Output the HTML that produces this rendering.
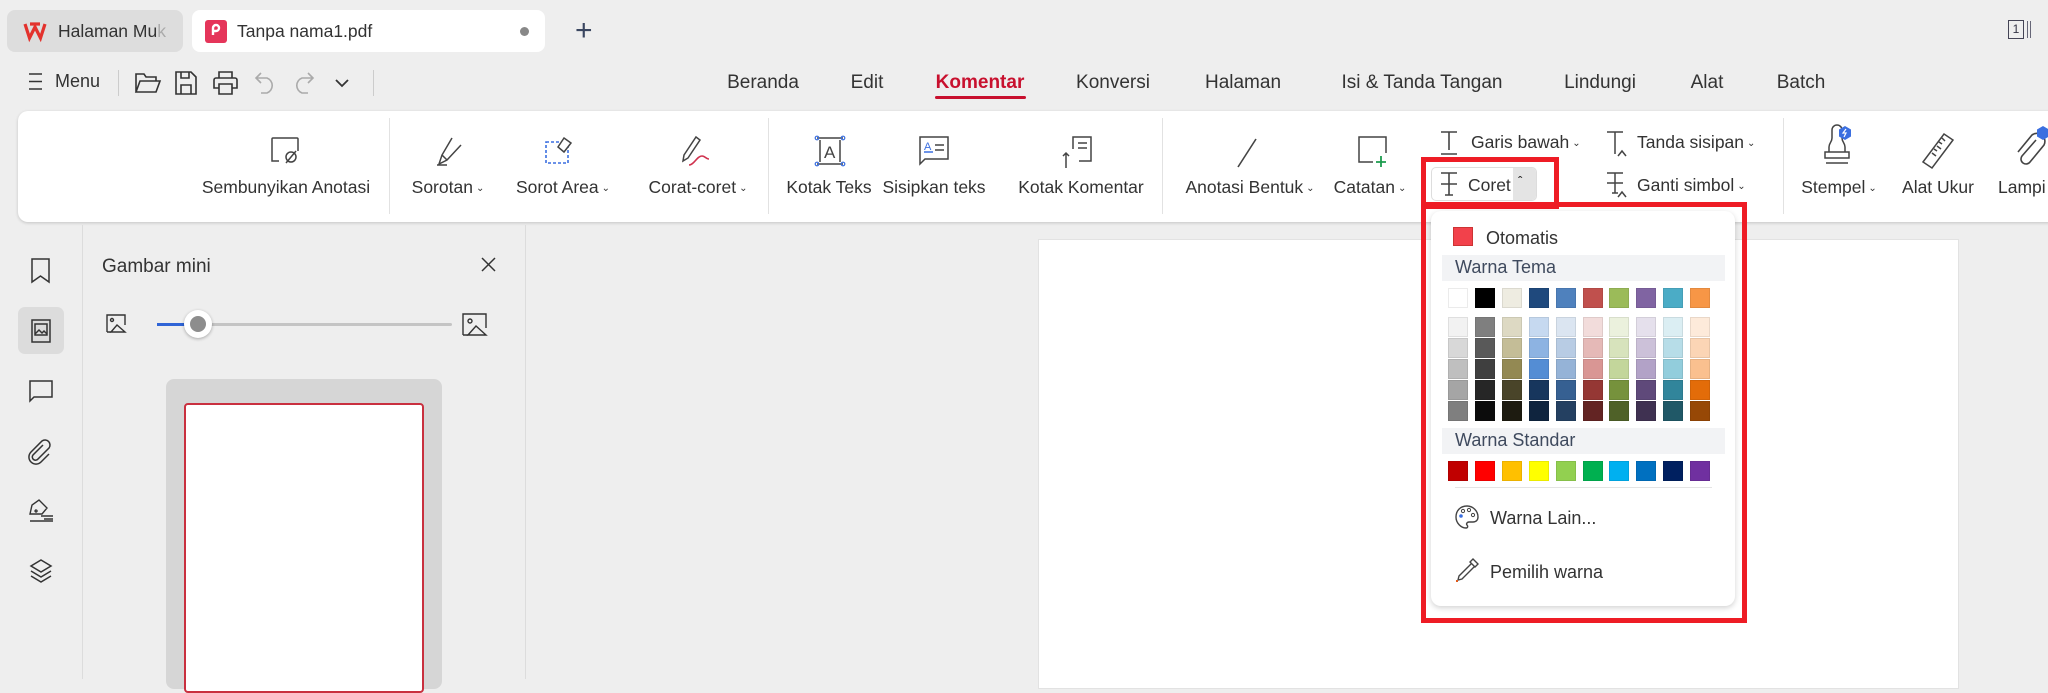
<!DOCTYPE html>
<html><head><meta charset="utf-8"><style>
*{box-sizing:border-box;margin:0;padding:0}
body{width:2048px;height:679px;overflow:hidden;background:#eeeeee;font-family:"Liberation Sans",sans-serif;color:#222;position:relative}
.a{position:absolute}
.t{position:absolute;white-space:nowrap;font-size:17.5px;color:#333}
.c{transform:translateX(-50%)}
svg{position:absolute;overflow:visible}
.sw{position:absolute;width:20px;height:20px;border:1px solid rgba(0,0,0,.08)}
.ch{font-size:10px;color:#333;margin-left:3px;vertical-align:2px}
</style></head><body>
<div class="a" style="left:7px;top:10px;width:176px;height:42px;background:#dddddd;border-radius:8px"></div>
<svg style="left:24px;top:21px" width="22" height="20" viewBox="0 0 22 20"><path d="M1 3 L5.5 17 L11 6 L16.5 17 L21 3 M6 3 H16" fill="none" stroke="#e3322d" stroke-width="3.2"/></svg>
<div class="t" style="left:58px;top:21px;color:#333">Halaman Mu<span style="color:#aaa">k</span></div>
<div class="a" style="left:192px;top:10px;width:353px;height:42px;background:#fff;border-radius:8px"></div>
<div class="a" style="left:205px;top:20px;width:22px;height:23px;background:#e5355a;border-radius:3px"></div>
<svg style="left:209px;top:23px" width="14" height="14" viewBox="0 0 14 14"><path d="M4 12 V5 a3 3 0 1 1 3 3 H4" fill="none" stroke="#fff" stroke-width="2.4"/></svg>
<div class="t" style="left:237px;top:21px">Tanpa nama1.pdf</div>
<div class="a" style="left:520px;top:27px;width:9px;height:9px;border-radius:50%;background:#888"></div>
<div class="t" style="left:575px;top:14px;font-size:30px;color:#3a4660">+</div>
<div class="a" style="left:2008px;top:20px;width:16px;height:19px;border:1.5px solid #445;font-size:12px;text-align:center;line-height:16px;color:#334">1</div>
<div class="a" style="left:2027px;top:21px;width:1px;height:17px;background:#667"></div>
<div class="a" style="left:2030px;top:21px;width:1px;height:17px;background:#667"></div>
<svg style="left:29px;top:73px" width="13" height="17"><path d="M0 1H13M0 8.5H13M0 16H13" stroke="#333" stroke-width="1.5"/></svg>
<div class="t" style="left:55px;top:71px;font-size:18px">Menu</div>
<div class="a" style="left:118px;top:70px;width:1px;height:26px;background:#ccc"></div>
<svg style="left:135px;top:72px" width="26" height="22" viewBox="0 0 26 22" fill="none" stroke="#333" stroke-width="1.6"><path d="M1 20V2h8l2 3h10v4M1 20l4-11h20l-4 11z"/></svg>
<svg style="left:175px;top:71px" width="22" height="24" viewBox="0 0 22 24" fill="none" stroke="#333" stroke-width="1.6"><path d="M1 1h15l5 5v17H1zM6 1v6h8V1M6 23v-9h10v9"/></svg>
<svg style="left:213px;top:71px" width="25" height="24" viewBox="0 0 25 24" fill="none" stroke="#333" stroke-width="1.6"><path d="M6 7V1h13v6M3 7h19a2 2 0 0 1 2 2v8h-5M6 17H1V9a2 2 0 0 1 2-2M6 13h13v10H6z"/></svg>
<svg style="left:255px;top:72px" width="21" height="22" viewBox="0 0 21 22" fill="none" stroke="#aaa" stroke-width="1.6"><path d="M6 1L1 6l5 5M1 6h11a8 8 0 0 1 0 15H6"/></svg>
<svg style="left:293px;top:72px" width="21" height="22" viewBox="0 0 21 22" fill="none" stroke="#aaa" stroke-width="1.6"><path d="M15 1l5 5-5 5M20 6H9a8 8 0 0 0 0 15h6"/></svg>
<svg style="left:335px;top:79px" width="14" height="8"><path d="M1 1l6 6 6-6" fill="none" stroke="#333" stroke-width="1.8"/></svg>
<div class="a" style="left:373px;top:70px;width:1px;height:26px;background:#ccc"></div>
<div class="t c" style="left:763px;top:72px;font-size:19px">Beranda</div>
<div class="t c" style="left:867px;top:72px;font-size:19px">Edit</div>
<div class="t c" style="left:980px;top:72px;font-size:19px;color:#c8102e;font-weight:bold">Komentar</div>
<div class="a" style="left:935px;top:96px;width:91px;height:3px;background:#c8102e;border-radius:2px"></div>
<div class="t c" style="left:1113px;top:72px;font-size:19px">Konversi</div>
<div class="t c" style="left:1243px;top:72px;font-size:19px">Halaman</div>
<div class="t c" style="left:1422px;top:72px;font-size:19px">Isi &amp; Tanda Tangan</div>
<div class="t c" style="left:1600px;top:72px;font-size:19px">Lindungi</div>
<div class="t c" style="left:1707px;top:72px;font-size:19px">Alat</div>
<div class="t c" style="left:1801px;top:72px;font-size:19px">Batch</div>
<div class="a" style="left:18px;top:111px;width:2060px;height:111px;background:#fff;border-radius:10px;box-shadow:0 1px 3px rgba(0,0,0,.18)"></div>
<div class="a" style="left:389px;top:118px;width:1px;height:96px;background:#e2e2e2"></div>
<div class="a" style="left:768px;top:118px;width:1px;height:96px;background:#e2e2e2"></div>
<div class="a" style="left:1162px;top:118px;width:1px;height:96px;background:#e2e2e2"></div>
<div class="a" style="left:1783px;top:118px;width:1px;height:96px;background:#e2e2e2"></div>
<svg style="left:271px;top:137px" width="30" height="28" viewBox="0 0 30 28" fill="none" stroke="#444" stroke-width="1.5"><path d="M4 24H1V2a1 1 0 0 1 1-1h24a1 1 0 0 1 1 1v12M4 24h4"/><circle cx="20" cy="20" r="5"/><path d="M15 26l10-12"/></svg>
<svg style="left:434px;top:137px" width="28" height="29" viewBox="0 0 28 29" fill="none" stroke="#444" stroke-width="1.5"><path d="M18 1L8 18l-3 9 8-4 14-15M8 18l5 5M3 28h10"/></svg>
<svg style="left:545px;top:137px" width="30" height="27" viewBox="0 0 30 27" fill="none"><rect x="1" y="5" width="22" height="21" stroke="#3b6fe0" stroke-width="1.6" stroke-dasharray="3 2"/><path d="M19 1l7 5-7 9-6-5z" fill="#fff" stroke="#444" stroke-width="1.5"/></svg>
<svg style="left:681px;top:136px" width="32" height="32" viewBox="0 0 32 32" fill="none"><path d="M15 1l4 3L7 22l-5 3 1-6z" stroke="#444" stroke-width="1.5"/><path d="M8 29c5 0 8-9 13-9 3 0 4 3 7 3" stroke="#d0334f" stroke-width="1.6"/></svg>
<svg style="left:815px;top:135px" width="30" height="32" viewBox="0 0 30 32" fill="none"><path d="M2 3h26M2 29h26M5 5v22M25 5v22" stroke="#444" stroke-width="1.5"/><circle cx="2" cy="3" r="1.8" stroke="#3b6fe0" stroke-width="1.2"/><circle cx="28" cy="3" r="1.8" stroke="#3b6fe0" stroke-width="1.2"/><circle cx="2" cy="29" r="1.8" stroke="#3b6fe0" stroke-width="1.2"/><circle cx="28" cy="29" r="1.8" stroke="#3b6fe0" stroke-width="1.2"/><text x="9" y="23" font-size="17" fill="#444" stroke="none" font-family="Liberation Sans">A</text></svg>
<svg style="left:919px;top:136px" width="30" height="30" viewBox="0 0 30 30" fill="none" stroke="#444" stroke-width="1.5"><path d="M1 1h28v22H6l-5 5z"/><text x="5" y="14" font-size="11" fill="#3b6fe0" stroke="none" font-family="Liberation Sans">A</text><path d="M5 16h9" stroke="#3b6fe0"/><path d="M16 9h9M16 14h9"/></svg>
<svg style="left:1063px;top:135px" width="30" height="34" viewBox="0 0 30 34" fill="none" stroke="#444" stroke-width="1.5"><path d="M10 14V2h18v24H16M15 8h9M15 13h9M3 33V18M0 21l3-3 3 3"/></svg>
<svg style="left:1236px;top:138px" width="22" height="30"><path d="M20 1L2 29" stroke="#444" stroke-width="1.6"/></svg>
<svg style="left:1358px;top:136px" width="33" height="32" viewBox="0 0 33 32" fill="none"><path d="M5 26H1V1h27v16M5 26h10" stroke="#444" stroke-width="1.5"/><path d="M18 26h10M23 20v11" stroke="#1c9c4e" stroke-width="1.8"/></svg>
<svg style="left:1440px;top:131px" width="18" height="24" viewBox="0 0 18 24" fill="none" stroke="#444" stroke-width="1.6"><path d="M1 1h16M9 1v18M1 23h16"/></svg>
<div class="t" style="left:1471px;top:132px">Garis bawah<span class="ch">⌄</span></div>
<svg style="left:1606px;top:131px" width="24" height="26" viewBox="0 0 24 26" fill="none" stroke="#444" stroke-width="1.5"><path d="M1 1h16M9 1v22M12 25l4-5 4 5"/></svg>
<div class="t" style="left:1637px;top:132px">Tanda sisipan<span class="ch">⌄</span></div>
<div class="a" style="left:1431px;top:167px;width:106px;height:34px;border:1px solid #ddd;border-radius:5px;background:#fff"></div>
<div class="a" style="left:1513px;top:168px;width:23px;height:32px;background:#e4e4e4;border-radius:0 4px 4px 0"></div>
<svg style="left:1440px;top:172px" width="18" height="24" viewBox="0 0 18 24" fill="none" stroke="#444" stroke-width="1.6"><path d="M1 1h16M9 1v22M1 12h16M5 23h8"/></svg>
<div class="t" style="left:1468px;top:175px">Coret</div>
<div class="t" style="left:1518px;top:174px;font-size:12px;font-weight:bold">&#710;</div>
<div class="a" style="left:1421px;top:157px;width:138px;height:52px;border:5px solid #ee1c25"></div>
<svg style="left:1606px;top:172px" width="24" height="26" viewBox="0 0 24 26" fill="none" stroke="#444" stroke-width="1.5"><path d="M1 1h16M9 1v20M1 11h16M12 25l4-5 4 5M6 21h6"/></svg>
<div class="t" style="left:1637px;top:175px">Ganti simbol<span class="ch">⌄</span></div>
<svg style="left:1820px;top:126px" width="34" height="42" viewBox="0 0 34 42" fill="none"><path d="M12 4a5 5 0 0 1 10 0v8c0 4 3 5 3 9v5H9v-5c0-4 3-5 3-9zM5 26h24v6H5zM6 37h22" stroke="#444" stroke-width="1.5"/><path d="M25 0l6 3.5v7L25 14l-6-3.5v-7z" fill="#3b6fe0"/><path d="M26 3l-3 4h3l-2 4" stroke="#fff" stroke-width="1.2"/></svg>
<svg style="left:1922px;top:133px" width="32" height="36" viewBox="0 0 32 36" fill="none" stroke="#444" stroke-width="1.5"><path d="M22 1l9 6L10 35l-9-6zM20 5l3 3M17 9l3 2M15 13l4 3M12 16l3 2M10 20l4 3"/></svg>
<svg style="left:2016px;top:126px" width="34" height="44" viewBox="0 0 34 44" fill="none"><path d="M20 14L6 30a5 5 0 0 0 8 6l14-17a8 8 0 0 0-12-10L2 26" stroke="#444" stroke-width="1.6"/><path d="M27 0l6 3.5v7L27 14l-6-3.5v-7z" fill="#3b6fe0"/></svg>
<div class="t c" style="left:286px;top:177px">Sembunyikan Anotasi</div>
<div class="t c" style="left:448px;top:177px">Sorotan<span class="ch">⌄</span></div>
<div class="t c" style="left:563px;top:177px">Sorot Area<span class="ch">⌄</span></div>
<div class="t c" style="left:698px;top:177px">Corat-coret<span class="ch">⌄</span></div>
<div class="t c" style="left:829px;top:177px">Kotak Teks</div>
<div class="t c" style="left:934px;top:177px">Sisipkan teks</div>
<div class="t c" style="left:1081px;top:177px">Kotak Komentar</div>
<div class="t c" style="left:1250px;top:177px">Anotasi Bentuk<span class="ch">⌄</span></div>
<div class="t c" style="left:1370px;top:177px">Catatan<span class="ch">⌄</span></div>
<div class="t c" style="left:1839px;top:177px">Stempel<span class="ch">⌄</span></div>
<div class="t c" style="left:1938px;top:177px">Alat Ukur</div>
<div class="t" style="left:1998px;top:177px">Lampi</div>
<div class="a" style="left:82px;top:225px;width:1px;height:454px;background:#dcdcdc"></div>
<div class="a" style="left:525px;top:225px;width:1px;height:454px;background:#dcdcdc"></div>
<div class="a" style="left:18px;top:307px;width:46px;height:47px;background:#dcdcdc;border-radius:7px"></div>
<svg style="left:31px;top:258px" width="19" height="25"><path d="M1 1h17v23l-8.5-6L1 24z" fill="none" stroke="#333" stroke-width="1.5"/></svg>
<svg style="left:31px;top:319px" width="20" height="24" fill="none" stroke="#333" stroke-width="1.5"><rect x="1" y="1" width="18" height="22"/><rect x="4" y="5" width="12" height="11"/><path d="M4 15l4-4 3 3 2-2 3 3"/></svg>
<svg style="left:29px;top:380px" width="24" height="22" fill="none" stroke="#333" stroke-width="1.5"><path d="M1 1h22v16H5l-4 4z"/></svg>
<svg style="left:29px;top:439px" width="24" height="24" fill="none" stroke="#333" stroke-width="1.5"><path d="M14 6L4 16a3 3 0 0 0 5 4l11-11a5 5 0 0 0-7-7L2 13a7 7 0 0 0 10 10l8-8"/></svg>
<svg style="left:29px;top:499px" width="25" height="23" fill="none" stroke="#333" stroke-width="1.4"><path d="M10 1l8 8-5 6H1l2-9zM7 11a1 1 0 1 0 0.1 0M12 17h12M15 20h9M1 22h23"/></svg>
<svg style="left:30px;top:559px" width="22" height="24" fill="none" stroke="#333" stroke-width="1.5"><path d="M11 1l10 6-10 6L1 7zM1 12l10 6 10-6M1 17l10 6 10-6"/></svg>
<div class="t" style="left:102px;top:256px;font-size:19px;color:#333">Gambar mini</div>
<svg style="left:481px;top:257px" width="15" height="15"><path d="M1 1l13 13M14 1L1 14" stroke="#333" stroke-width="1.5"/></svg>
<svg style="left:106px;top:314px" width="20" height="19" fill="none" stroke="#333" stroke-width="1.4"><path d="M1 18V1h18v10M1 18h4"/><circle cx="6" cy="6" r="1.5"/><path d="M5 18l6-7 8 7z"/></svg>
<div class="a" style="left:157px;top:323px;width:295px;height:3px;background:#c4c4c4;border-radius:2px"></div>
<div class="a" style="left:157px;top:323px;width:40px;height:3px;background:#2f64d6"></div>
<div class="a" style="left:184px;top:310px;width:28px;height:28px;border-radius:50%;background:#fff;box-shadow:0 1px 3px rgba(0,0,0,.3)"></div>
<div class="a" style="left:190px;top:316px;width:16px;height:16px;border-radius:50%;background:#8d8d8d"></div>
<svg style="left:462px;top:313px" width="25" height="23" fill="none" stroke="#333" stroke-width="1.4"><path d="M1 22V1h23v14M1 22h5"/><circle cx="8" cy="8" r="2"/><path d="M6 22l8-9 10 9z"/></svg>
<div class="a" style="left:166px;top:379px;width:276px;height:310px;background:#d6d6d6;border-radius:8px"></div>
<div class="a" style="left:184px;top:403px;width:240px;height:290px;background:#fff;border:2px solid #c9303f;border-radius:4px"></div>
<div class="a" style="left:1038px;top:239px;width:921px;height:450px;background:#fff;border:1px solid #e2e2e2"></div>
<div class="a" style="left:1421px;top:202px;width:326px;height:421px;border:5px solid #ee1c25"></div>
<div class="a" style="left:1431px;top:211px;width:304px;height:395px;background:#fff;border-radius:10px;box-shadow:0 2px 6px rgba(0,0,0,.18)"></div>
<div class="a" style="left:1453px;top:227px;width:20px;height:19px;background:#f2414b;border:1px solid #c33"></div>
<div class="t" style="left:1486px;top:228px;font-size:18px">Otomatis</div>
<div class="a" style="left:1442px;top:255px;width:283px;height:26px;background:#f2f3f5"></div>
<div class="t" style="left:1455px;top:257px;font-size:18px;color:#3f4a5e">Warna Tema</div>
<div class="a" style="left:1442px;top:428px;width:283px;height:26px;background:#f2f3f5"></div>
<div class="t" style="left:1455px;top:430px;font-size:18px;color:#3f4a5e">Warna Standar</div>
<div id="sw"></div>
<div class="a" style="left:1455px;top:487px;width:257px;height:1px;background:#e4e4e4"></div>
<svg style="left:1455px;top:505px" width="24" height="24" viewBox="0 0 24 24" fill="none"><path d="M12 1C5 1 1 6 1 12s5 11 10 11c2 0 2-2 1-3s0-3 2-3h4c3 0 5-2 5-5C23 6 18 1 12 1z" stroke="#444" stroke-width="1.4"/><circle cx="6" cy="11" r="1.8" fill="#3b6fe0"/><circle cx="8" cy="6" r="1.6" stroke="#444"/><circle cx="14" cy="5" r="1.6" stroke="#444"/><circle cx="18" cy="10" r="1.6" stroke="#444"/></svg>
<div class="t" style="left:1490px;top:508px;font-size:18px">Warna Lain...</div>
<svg style="left:1455px;top:558px" width="25" height="24" viewBox="0 0 25 24" fill="none"><path d="M18 1l5 5-3 3-5-5zM16 6L4 18l-1 4 4-1L19 9" stroke="#444" stroke-width="1.4"/><rect x="1" y="22" width="2" height="2" fill="#e05a1a"/></svg>
<div class="t" style="left:1490px;top:562px;font-size:18px">Pemilih warna</div>
<script>
var topc=["#ffffff","#000000","#eeece1","#1f497d","#4f81bd","#c0504d","#9bbb59","#8064a2","#4bacc6","#f79646"];
var sh=[["#f2f2f2","#7f7f7f","#ddd9c3","#c6d9f0","#dbe5f1","#f2dcdb","#ebf1dd","#e5e0ec","#dbeef3","#fdeada"],
["#d8d8d8","#595959","#c4bd97","#8db3e2","#b8cce4","#e5b9b7","#d7e3bc","#ccc1d9","#b7dde8","#fbd5b5"],
["#bfbfbf","#3f3f3f","#938953","#548dd4","#95b3d7","#d99694","#c3d69b","#b2a2c7","#92cddc","#fac08f"],
["#a5a5a5","#262626","#494429","#17365d","#366092","#953734","#76923c","#5f497a","#31859b","#e36c09"],
["#7f7f7f","#0c0c0c","#1d1b10","#0f243e","#244061","#632423","#4f6128","#3f3151","#205867","#974806"]];
var st=["#c00000","#ff0000","#ffc000","#ffff00","#92d050","#00b050","#00b0f0","#0070c0","#002060","#7030a0"];
var h="";
for(var i=0;i<10;i++){var x=1448+i*26.9;
h+='<div class="sw" style="left:'+x+'px;top:288px;background:'+topc[i]+'"></div>';
for(var r=0;r<5;r++)h+='<div class="sw" style="left:'+x+'px;top:'+(317+r*21)+'px;height:20px;background:'+sh[r][i]+'"></div>';
h+='<div class="sw" style="left:'+x+'px;top:461px;background:'+st[i]+'"></div>';}
document.getElementById("sw").innerHTML=h;
</script>
</body></html>
